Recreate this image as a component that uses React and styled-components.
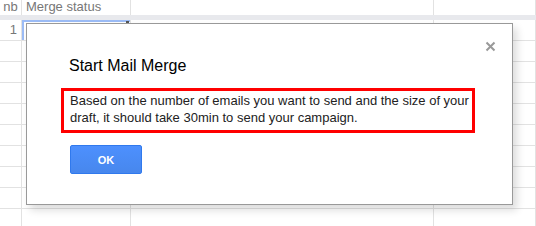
import React from 'react';
import styled, { createGlobalStyle } from 'styled-components';

const GlobalStyle = createGlobalStyle`
    * { box-sizing: border-box; }
    body {
        margin: 0;
        background: #fff;
        font-family: "Liberation Sans", Arial, sans-serif;
    }
`;

const Page = styled.div`
    position: relative;
    width: 536px;
    height: 226px;
    overflow: hidden;
    background: #fff;
`;

const Sheet = styled.div`
    display: flex;
    flex-direction: column;
`;

const Row = styled.div`
    display: grid;
    grid-template-columns: 22px 109px 303px 102px;
    height: ${p => p.$height}px;
    border-bottom: ${p => (p.$line ? '1px solid #e2e2e2' : 'none')};
`;

const Cell = styled.div`
    position: relative;
    border-right: 1px solid #e2e2e2;
    font-size: 13px;
    line-height: ${p => (p.$header ? '13px' : '20px')};
    color: #777;
    padding: 0 4px;
    text-align: ${p => p.$align || 'left'};
    white-space: nowrap;
    overflow: hidden;
`;

const SelectedCell = styled(Cell)`
    box-shadow: inset 2px 2px 0 #9cbcf6;
`;

const Handle = styled.span`
    position: absolute;
    right: 1px;
    top: 1px;
    width: 3px;
    height: 3px;
    background: #555;
`;

const FrozenBar = styled.div`
    height: 5px;
    background: #e8e9ed;
`;

const Dialog = styled.div`
    position: absolute;
    left: 26px;
    top: 23px;
    width: 487px;
    background: #fff;
    border: 1px solid #999;
    box-shadow: 4px 5px 8px rgba(0, 0, 0, 0.14);
    padding: 30px 42px;
`;

const Title = styled.div`
    font-size: 16px;
    line-height: 24px;
    color: #000;
`;

const Close = styled.button`
    position: absolute;
    top: 17px;
    right: 16px;
    width: 11px;
    height: 11px;
    padding: 0;
    border: none;
    background: none;
    display: flex;
    cursor: pointer;
`;

const Message = styled.div`
    margin: 10px 0 0 -8px;
    width: 414px;
    border: 3px solid #ff0000;
    padding: 1px 2px 4px 6px;
    font-size: 13px;
    line-height: 17px;
    color: #222;
    white-space: nowrap;
`;

const Buttons = styled.div`
    display: flex;
    margin-top: 12px;
    padding-left: 1px;
`;

const OkButton = styled.button`
    width: 72px;
    height: 29px;
    border: 1px solid #3079ed;
    border-radius: 2px;
    background: linear-gradient(#4d90fe, #4787ed);
    color: #fff;
    font-family: "Liberation Sans", Arial, sans-serif;
    font-weight: bold;
    font-size: 11px;
    cursor: pointer;
`;

const rows = Array.from({ length: 10 }, (_, i) => i + 1);

function App() {
    return (
        <Page>
            <GlobalStyle />
            <Sheet>
                <Row $height={15}>
                    <Cell $header $align="center" style={{ padding: 0 }}>nb</Cell>
                    <Cell $header>Merge status</Cell>
                    <Cell $header />
                    <Cell $header />
                </Row>
                <FrozenBar />
                {rows.map(num => (
                    <Row key={num} $height={21} $line>
                        <Cell $align="right">{num === 1 ? '1' : ''}</Cell>
                        {num === 1 ? (
                            <SelectedCell><Handle /></SelectedCell>
                        ) : <Cell />}
                        <Cell />
                        <Cell />
                    </Row>
                ))}
            </Sheet>

            <Dialog>
                <Close aria-label="Close">
                    <svg width="11" height="11" viewBox="0 0 11 11">
                        <path d="M1.5 1.5 L9.5 9.5 M9.5 1.5 L1.5 9.5" stroke="#999" strokeWidth="2" />
                    </svg>
                </Close>
                <Title>Start Mail Merge</Title>
                <Message>
                    Based on the number of emails you want to send and the size of your<br />
                    draft, it should take 30min to send your campaign.
                </Message>
                <Buttons>
                    <OkButton>OK</OkButton>
                </Buttons>
            </Dialog>
        </Page>
    );
}

export default App;
